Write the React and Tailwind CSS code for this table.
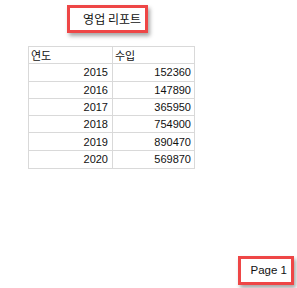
import React from "react";

const rows = [
  ["2015", "152360"],
  ["2016", "147890"],
  ["2017", "365950"],
  ["2018", "754900"],
  ["2019", "890470"],
  ["2020", "569870"],
];

export default function App() {
  return (
    <div
      className="w-[297px] h-[288px] bg-white flex flex-col text-[#111]"
      style={{ fontFamily: '"Liberation Sans", Arial, "Noto Sans CJK KR", sans-serif' }}
    >
      <div className="ml-[67px] mt-[5px] w-[81px] h-[28px] border-[3px] border-[#ee4646] shadow-[2px_3px_4px_rgba(0,0,0,0.35)] flex items-center justify-end pr-[4px] text-[12px] leading-none">
        <span style={{ fontFamily: '"Noto Sans CJK KR", sans-serif' }}>영업 리포트</span>
      </div>

      <div className="ml-[28px] mt-[13px] w-[167px] border border-[#d9d9d9] text-[11px] leading-none">
        <div className="grid grid-cols-[84px_1fr] h-[17.3px] border-b border-[#d9d9d9]">
          <div className="border-r border-[#d9d9d9] flex items-center pl-[2px]" style={{ fontFamily: '"Noto Sans CJK KR", sans-serif' }}>연도</div>
          <div className="flex items-center pl-[2px]" style={{ fontFamily: '"Noto Sans CJK KR", sans-serif' }}>수입</div>
        </div>
        {rows.map(([y, v], i) => (
          <div
            key={y}
            className={`grid grid-cols-[84px_1fr] h-[17.3px] ${i < rows.length - 1 ? "border-b border-[#d9d9d9]" : ""}`}
          >
            <div className="border-r border-[#d9d9d9] flex items-center justify-end pr-[4px] pt-[1px]">{y}</div>
            <div className="flex items-center justify-end pr-[3px] pt-[1px]">{v}</div>
          </div>
        ))}
      </div>

      <div className="self-end mt-[87px] mr-[3px] w-[56px] h-[29px] border-[3px] border-[#ee4646] shadow-[2px_3px_4px_rgba(0,0,0,0.35)] flex items-center justify-end pr-[4px] text-[11.5px] leading-none">
        Page 1
      </div>
    </div>
  );
}
